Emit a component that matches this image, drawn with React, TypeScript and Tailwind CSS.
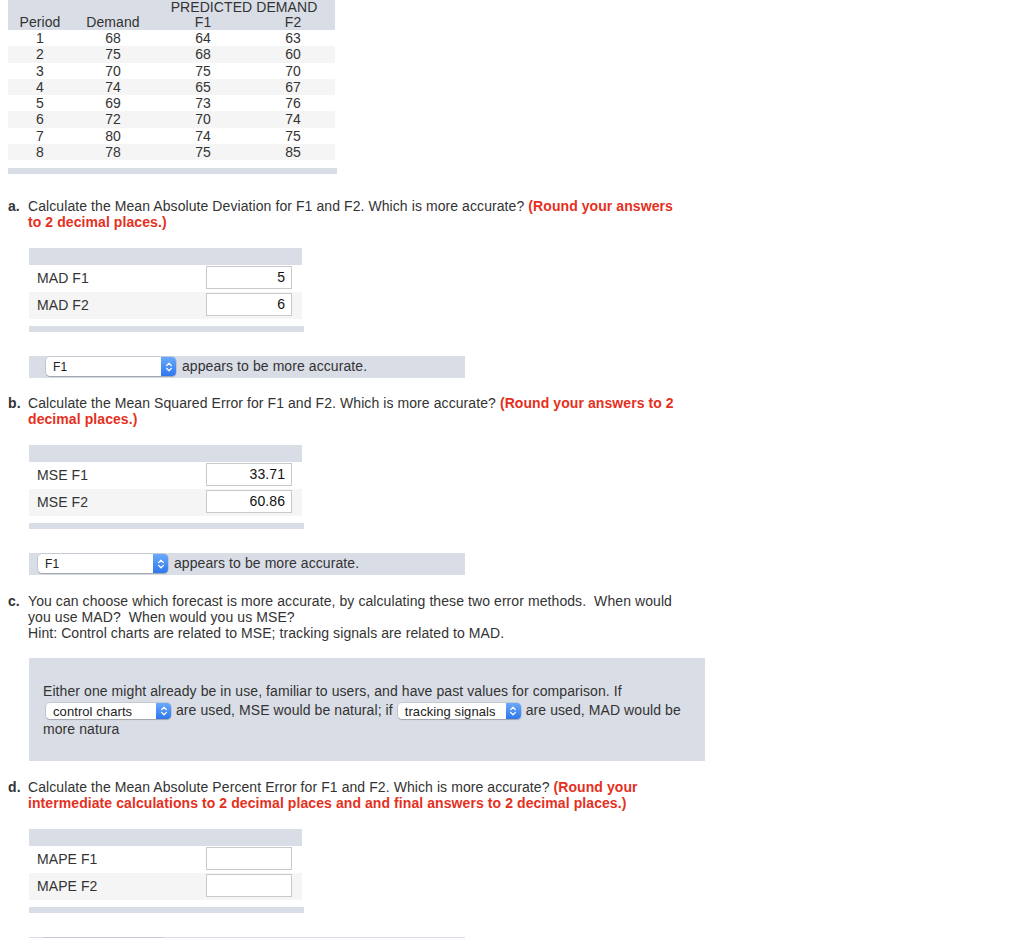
import React from 'react'

const demand = [
  [1, 68, 64, 63],
  [2, 75, 68, 60],
  [3, 70, 75, 70],
  [4, 74, 65, 67],
  [5, 69, 73, 76],
  [6, 72, 70, 74],
  [7, 80, 74, 75],
  [8, 78, 75, 85],
]

function Chevrons() {
  return (
    <svg width="8" height="12" viewBox="0 0 8 12" fill="none" stroke="white" strokeWidth={1.3} strokeLinecap="round" strokeLinejoin="round">
      <path d="M1.6 4.6L4 2.2l2.4 2.4" />
      <path d="M1.6 7.4L4 9.8l2.4-2.4" />
    </svg>
  )
}

function Select({ value, className, text = 'text-[12px]' }: { value: string; className: string; text?: string }) {
  return (
    <span
      className={`inline-flex align-middle rounded-[4px] bg-white shadow-[0_0_0_0.5px_rgba(0,0,0,0.18),0_1px_1px_rgba(0,0,0,0.18)] ${className}`}
    >
      <span className={`flex-1 flex items-center pl-[7px] text-[#222] ${text}`}>{value}</span>
      <span className="w-[15px] flex items-center justify-center rounded-r-[4px] bg-gradient-to-b from-[#6aa9fb] to-[#2e77ee]">
        <Chevrons />
      </span>
    </span>
  )
}

function AnswerTable({ rows }: { rows: [string, string][] }) {
  return (
    <div className="ml-[29px] mt-[18px]">
      <div className="h-[17px] w-[273px] bg-[#d9dde6]" />
      {rows.map(([label, value], i) => (
        <div key={label} className={`flex h-[27px] w-[273px] ${i % 2 === 1 ? 'bg-[#f5f5f5]' : 'bg-white'}`}>
          <div className="w-[177px] pl-2 leading-[27px]">{label}</div>
          <div className="mt-px h-[23px] w-[86px] border border-[#c9c9c9] bg-white pr-[6px] text-right leading-[21px] text-[#111]">
            {value}
          </div>
        </div>
      ))}
      <div className="mt-[7px] h-[6px] w-[275px] bg-[#d9dde6]" />
    </div>
  )
}

function Question({ letter, children }: { letter: string; children: React.ReactNode }) {
  return (
    <div className="flex pl-2 leading-[16px]">
      <div className="w-[20px] font-bold">{letter}</div>
      <div>{children}</div>
    </div>
  )
}

function AccurateBar({ pad }: { pad: string }) {
  return (
    <div className={`ml-[29px] mt-[24px] flex h-[22px] w-[436px] items-center bg-[#d9dde6] ${pad}`}>
      <Select value="F1" className="w-[130px] h-[19px]" />
      <span className="ml-[6px]">appears to be more accurate.</span>
    </div>
  )
}

export default function App() {
  return (
    <div className="h-[938px] w-[1024px] overflow-hidden bg-white font-['Liberation_Sans',Arial,sans-serif] text-[14px] tracking-[0.08px] text-[#333]">
      {/* Data table */}
      <div className="ml-2 w-[327px]">
        <div className="bg-[#d9dde6]">
          <div className="grid h-[14px] grid-cols-[64px_82px_98px_82px] leading-[14px]">
            <div />
            <div />
            <div className="col-span-2 text-center">PREDICTED DEMAND</div>
          </div>
          <div className="grid h-[16px] grid-cols-[64px_82px_98px_82px] text-center leading-[16px]">
            <div>Period</div>
            <div>Demand</div>
            <div>F1</div>
            <div>F2</div>
          </div>
        </div>
        {demand.map((row, i) => (
          <div
            key={row[0]}
            className={`grid h-[16.3px] grid-cols-[64px_82px_98px_82px] text-center leading-[16.3px] ${i % 2 === 1 ? 'bg-[#f5f5f5]' : ''}`}
          >
            {row.map((v, j) => (
              <div key={j}>{v}</div>
            ))}
          </div>
        ))}
      </div>
      <div className="ml-2 mt-[7.5px] h-[6px] w-[329px] bg-[#d9dde6]" />

      {/* a */}
      <div className="mt-[24px]">
        <Question letter="a.">
          Calculate the Mean Absolute Deviation for F1 and F2. Which is more accurate?{' '}
          <b className="text-[#e5301e]">
            (Round your answers
            <br />
            to 2 decimal places.)
          </b>
        </Question>
      </div>
      <AnswerTable
        rows={[
          ['MAD F1', '5'],
          ['MAD F2', '6'],
        ]}
      />
      <AccurateBar pad="pl-[17px]" />

      {/* b */}
      <div className="mt-[17px]">
        <Question letter="b.">
          Calculate the Mean Squared Error for F1 and F2. Which is more accurate?{' '}
          <b className="text-[#e5301e]">
            (Round your answers to 2
            <br />
            decimal places.)
          </b>
        </Question>
      </div>
      <AnswerTable
        rows={[
          ['MSE F1', '33.71'],
          ['MSE F2', '60.86'],
        ]}
      />
      <AccurateBar pad="pl-[9px]" />

      {/* c */}
      <div className="mt-[18px]">
        <Question letter="c.">
          You can choose which forecast is more accurate, by calculating these two error methods.&nbsp; When would
          <br />
          you use MAD?&nbsp; When would you us MSE?
          <br />
          Hint: Control charts are related to MSE; tracking signals are related to MAD.
        </Question>
      </div>
      <div className="ml-[29px] mt-[17px] h-[103px] w-[676px] bg-[#d9dde6] pl-[14px] pt-[24px] leading-[19px]">
        Either one might already be in use, familiar to users, and have past values for comparison. If
        <br />
        <Select value="control charts" text="text-[13px]" className="ml-[3px] mr-[5px] w-[125px] h-[16px]" />
        are used, MSE would be natural; if{' '}
        <Select value="tracking signals" text="text-[13px]" className="ml-px mr-[5px] w-[123px] h-[16px]" />
        are used, MAD would be
        <br />
        more natura
      </div>

      {/* d */}
      <div className="mt-[18px]">
        <Question letter="d.">
          Calculate the Mean Absolute Percent Error for F1 and F2. Which is more accurate?{' '}
          <b className="text-[#e5301e]">
            (Round your
            <br />
            intermediate calculations to 2 decimal places and and final answers to 2 decimal places.)
          </b>
        </Question>
      </div>
      <AnswerTable
        rows={[
          ['MAPE F1', ''],
          ['MAPE F2', ''],
        ]}
      />
      <div className="ml-[29px] mt-[24px] flex h-[22px] w-[436px] items-center bg-[#d9dde6] pl-[11px]">
        <Select value="" className="w-[126px] h-[19px]" />
      </div>
    </div>
  )
}
